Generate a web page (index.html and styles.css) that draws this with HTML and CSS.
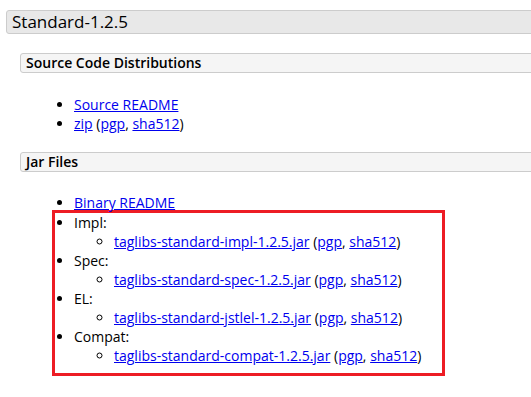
FILE: index.html
```html
<!DOCTYPE html>
<html lang="en">
<head>
    <meta charset="UTF-8">
    <title>Standard-1.2.5</title>
    <link rel="stylesheet" href="styles.css">
</head>
<body>
    <div class="page">
        <h2 class="title">Standard-1.2.5</h2>

        <div class="section">
            <h3 class="section-title">Source Code Distributions</h3>
            <ul class="files">
                <li><a href="#">Source README</a></li>
                <li><a href="#">zip</a> (<a href="#">pgp</a>, <a href="#">sha512</a>)</li>
            </ul>
        </div>

        <div class="section">
            <h3 class="section-title">Jar Files</h3>
            <ul class="files files-top">
                <li><a href="#">Binary README</a></li>
            </ul>
            <!-- highlighted jars -->
            <ul class="files highlight">
                <li>Impl:
                    <ul class="sub">
                        <li><a href="#">taglibs-standard-impl-1.2.5.jar</a> (<a href="#">pgp</a>, <a href="#">sha512</a>)</li>
                    </ul>
                </li>
                <li>Spec:
                    <ul class="sub">
                        <li><a href="#">taglibs-standard-spec-1.2.5.jar</a> (<a href="#">pgp</a>, <a href="#">sha512</a>)</li>
                    </ul>
                </li>
                <li>EL:
                    <ul class="sub">
                        <li><a href="#">taglibs-standard-jstlel-1.2.5.jar</a> (<a href="#">pgp</a>, <a href="#">sha512</a>)</li>
                    </ul>
                </li>
                <li>Compat:
                    <ul class="sub">
                        <li><a href="#">taglibs-standard-compat-1.2.5.jar</a> (<a href="#">pgp</a>, <a href="#">sha512</a>)</li>
                    </ul>
                </li>
            </ul>
        </div>
    </div>
</body>
</html>
```

FILE: styles.css
```css
/* General styling */
body {
    margin: 0;
    font-family: "Open Sans", "Liberation Sans", sans-serif;
    font-size: 14px;
    color: #000;
    background-color: #fff;
    overflow: hidden;
}
.page {
    width: 640px;
    padding: 10px 0 0 6px;
}
a {
    color: #0000ee;
}

/* Headings */
.title {
    margin: 0;
    padding: 0 5px;
    font-size: 17px;
    font-weight: normal;
    line-height: 22px;
    background-color: #e8e8e8;
    border: 1px solid #cccccc;
    border-radius: 3px;
}
.section {
    margin: 19px 0 0 14px;
}
.section-title {
    margin: 0;
    padding: 0 5px;
    font-size: 14px;
    font-weight: 600;
    line-height: 18px;
    background-color: #f5f5f5;
    border: 1px solid #cccccc;
    border-radius: 3px;
}

/* File lists */
.files {
    margin: 22px 0 16px;
    padding-left: 54px;
    line-height: 19px;
}
.files-top {
    margin: 21px 0 0;
}
.sub {
    margin: 0;
    padding-left: 40px;
    list-style: circle;
}
.highlight {
    box-sizing: border-box;
    width: 393px;
    margin: -2px 0 0 32px;
    padding: 0 0 8px 19px;
    border: 3px solid #ed1c24;
}
```
